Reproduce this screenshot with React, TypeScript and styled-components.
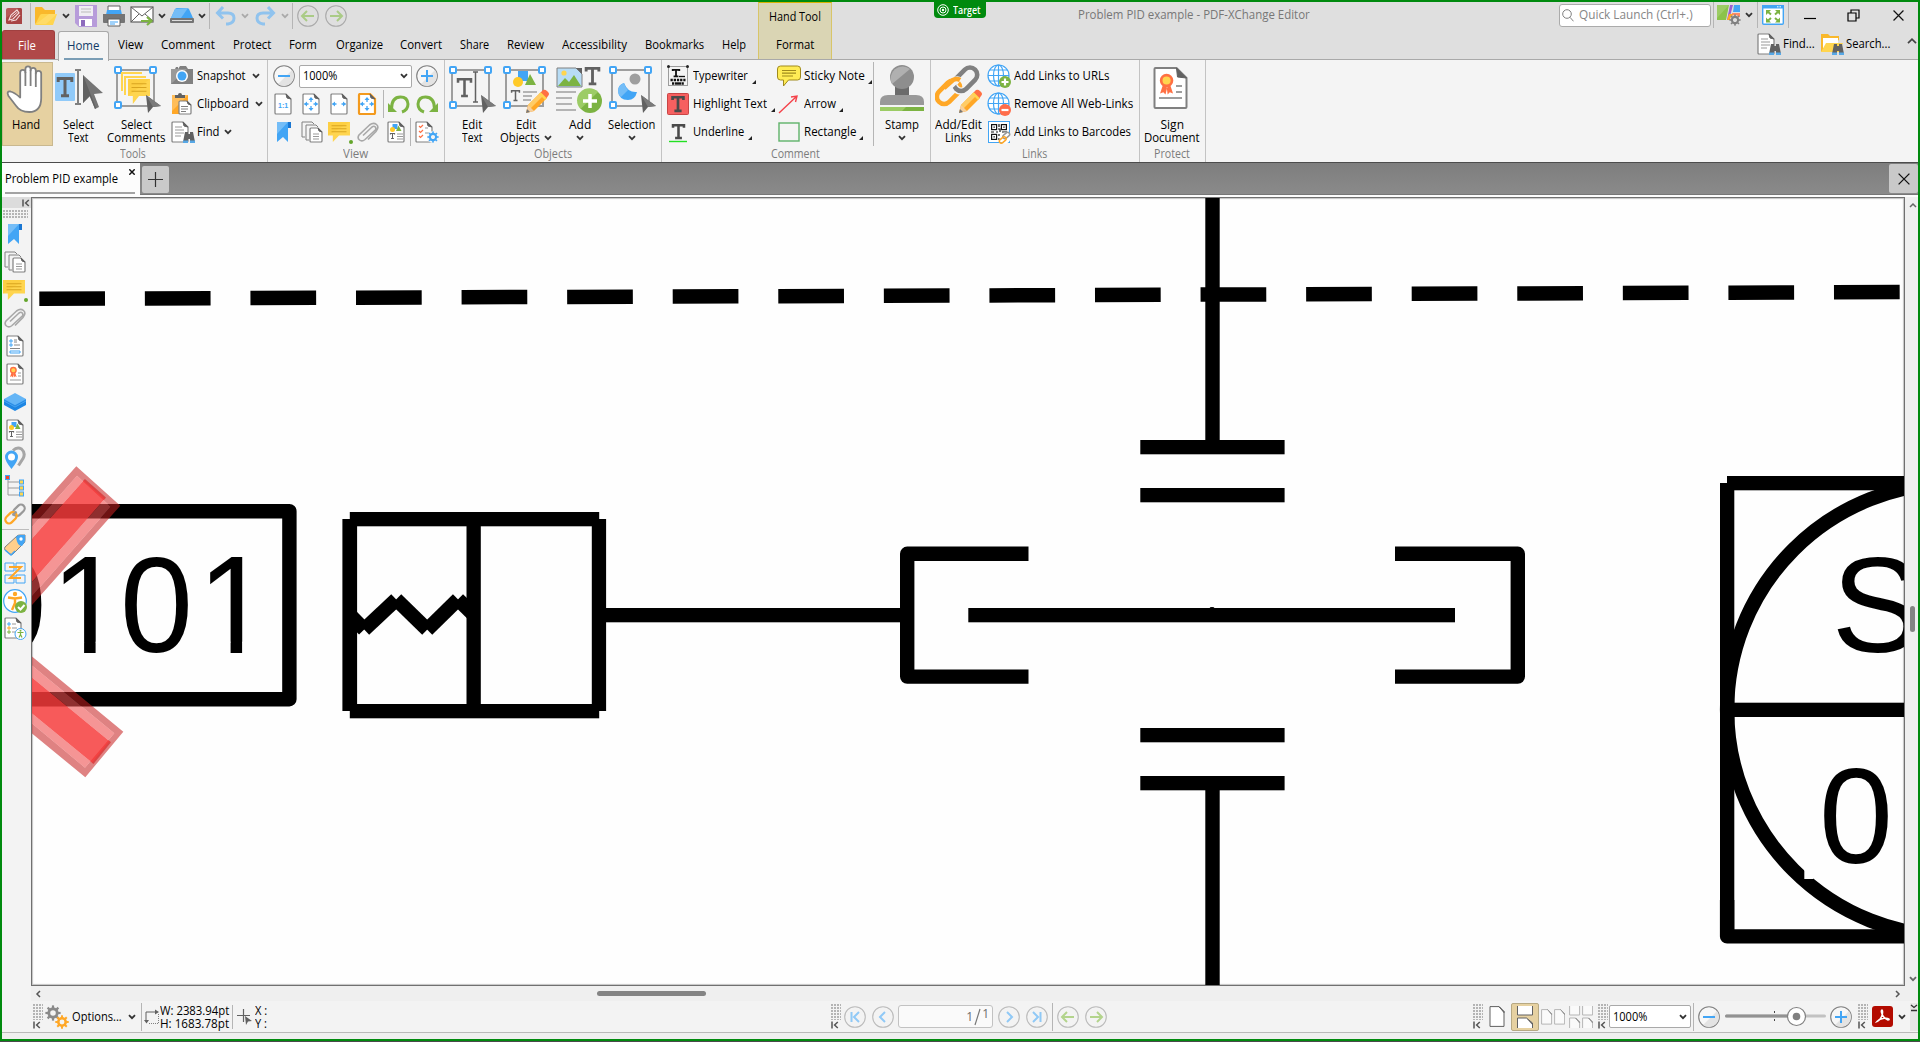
import React, { useLayoutEffect, useRef, useState } from 'react';
import styled, { createGlobalStyle } from 'styled-components';

const GlobalStyle = createGlobalStyle`
  html, body { margin: 0; padding: 0; overflow: hidden; background: #4a4a4a; }
  * { box-sizing: border-box; }
  svg { display: block; flex: none; }
`;

const BLUE = '#42a5f5';
const GRAY = '#808080';
const DARK = '#616161';
const YELLOW = '#ffd54f';
const ORANGE = '#ffa726';
const GREEN = '#7cb342';

/* ---------- text fitted to a fixed run width ---------- */

const FitOuter = styled.span<{ $w: number }>`
  display: inline-block;
  width: ${(p) => p.$w}px;
  white-space: nowrap;
  flex: none;
`;
const FitInner = styled.span`
  display: inline-block;
  transform-origin: 0 50%;
  white-space: nowrap;
`;
function Fit({ w, children }: { w: number; children: React.ReactNode }) {
  const ref = useRef<HTMLSpanElement>(null);
  const [scale, setScale] = useState(1);
  useLayoutEffect(() => {
    if (ref.current && ref.current.offsetWidth) setScale(w / ref.current.offsetWidth);
  }, [w]);
  return (
    <FitOuter $w={w}>
      <FitInner ref={ref} style={{ transform: `scaleX(${scale})` }}>{children}</FitInner>
    </FitOuter>
  );
}

/* ---------- window frame ---------- */

const Window = styled.div`
  width: 1920px;
  height: 1041px;
  border: 2px solid #008a0e;
  background: #f3f3f3;
  display: flex;
  flex-direction: column;
  overflow: hidden;
  color: #000;
  font: 12px/16px "Open Sans", "Noto Sans", sans-serif;
`;
const Header = styled.div`
  position: relative;
  height: 58px;
  background: #dfdfdf;
  border-bottom: 1px solid #a9a9a9;
  display: flex;
`;
const HeaderLeft = styled.div`
  width: 756px;
  display: flex;
  flex-direction: column;
`;
const HeaderRight = styled.div`
  flex: 1;
  display: flex;
  flex-direction: column;
`;
const Bar = styled.div<{ $h: number }>`
  height: ${(p) => p.$h}px;
  display: flex;
  align-items: center;
`;
const Slot = styled.div<{ $w: number; $up?: number }>`
  width: ${(p) => p.$w}px;
  flex: none;
  display: flex;
  align-items: center;
  justify-content: center;
  padding-bottom: ${(p) => p.$up ?? 0}px;
`;
const Sep = styled.div<{ $h: number }>`
  width: 1px;
  height: ${(p) => p.$h}px;
  background: #b5b5b5;
  flex: none;
`;
const Grow = styled.div`
  flex: 1;
`;
const TabItem = styled.div<{ $w: number; $kind?: 'file' | 'home' }>`
  width: ${(p) => p.$w}px;
  height: 29px;
  flex: none;
  display: flex;
  justify-content: center;
  padding-top: 7px;
  padding-right: ${(p) => (p.$kind === 'file' ? 3 : 0)}px;
  color: ${(p) => (p.$kind === 'file' ? '#fff' : p.$kind === 'home' ? '#123a66' : '#000')};
  background: ${(p) => (p.$kind === 'file' ? '#b04848' : p.$kind === 'home' ? '#f4f4f4' : 'transparent')};
  border-radius: ${(p) => (p.$kind ? '3px 3px 0 0' : '0')};
  border: ${(p) => (p.$kind === 'home' ? '1px solid #a9a9a9' : p.$kind === 'file' ? '1px solid #a04040' : 'none')};
  border-bottom: none;
`;
const HomeTab = styled(TabItem)`
  height: 30px;
  margin: 0 0 -2px 3px;
  padding-top: 6px;
  flex-direction: column;
  align-items: center;
  gap: 4px;
  justify-content: flex-start;
`;
const Underline = styled.div`
  width: 39px;
  height: 2px;
  background: #7a9db5;
`;
const ContextTab = styled.div`
  width: 74px;
  height: 57px;
  background: #dad5b4;
  border: 1px solid #d8c568;
  border-top: 1px solid #d9b400;
  border-bottom: none;
  display: flex;
  flex-direction: column;
  align-items: center;
  padding-top: 6px;
  gap: 12px;
`;
const TargetBadge = styled.div`
  position: absolute;
  left: 932px;
  top: -1px;
  width: 52px;
  height: 17px;
  border-radius: 0 0 4px 4px;
  background: #008a0e;
  color: #fff;
  display: flex;
  align-items: center;
  gap: 4px;
  padding-left: 3px;
  font: 600 10px/14px "Open Sans", sans-serif;
`;
const TitleText = styled.div`
  width: 636px;
  padding-left: 246px;
  color: #777;
`;
const SearchBox = styled.div`
  width: 152px;
  height: 23px;
  margin-left: 91px;
  background: #fff;
  border: 1px solid #ababab;
  border-radius: 3px;
  display: flex;
  align-items: center;
  gap: 5px;
  padding-left: 2px;
  color: #868686;
  flex: none;
`;

/* ---------- ribbon ---------- */

const Ribbon = styled.div`
  height: 103px;
  background: #f4f4f4;
  border-bottom: 1px solid #4c4c4c;
  display: flex;
`;
const Group = styled.div<{ $w: number }>`
  width: ${(p) => p.$w}px;
  border-right: 1px solid #c3c3c3;
  display: flex;
  flex-direction: column;
  align-items: stretch;
`;
const GroupBody = styled.div`
  height: 86px;
  padding-top: 2px;
  display: flex;
`;
const GroupLabel = styled.div<{ $pr?: number }>`
  height: 16px;
  padding-right: ${(p) => p.$pr ?? 0}px;
  display: flex;
  justify-content: center;
  color: #7c7c7c;
`;
const BigButton = styled.div<{ $w: number; $on?: boolean }>`
  width: ${(p) => p.$w}px;
  height: 84px;
  flex: none;
  display: flex;
  flex-direction: column;
  align-items: center;
  padding-top: ${(p) => (p.$on ? 2 : 3)}px;
  padding-right: ${(p) => (p.$on ? 3 : 0)}px;
  background: ${(p) => (p.$on ? '#e6d1a1' : 'transparent')};
  border: ${(p) => (p.$on ? '1px solid #c9b88f' : 'none')};
  line-height: 13px;
`;
const Caption = styled.div`
  margin-top: 5px;
  display: flex;
  flex-direction: column;
  align-items: center;
`;
const Line = styled.div`
  height: 13px;
  display: flex;
  align-items: center;
  gap: 4px;
`;
const Column = styled.div<{ $w?: number; $pl?: number }>`
  width: ${(p) => (p.$w ? p.$w + 'px' : 'auto')};
  padding-left: ${(p) => p.$pl ?? 0}px;
  display: flex;
  flex-direction: column;
`;
const Item = styled.div<{ $gap?: number }>`
  height: 28px;
  display: flex;
  align-items: center;
  gap: ${(p) => p.$gap ?? 4}px;
`;
const ItemTail = styled.div<{ $corner?: boolean }>`
  padding-left: ${(p) => (p.$corner ? 0 : 2)}px;
  padding-top: ${(p) => (p.$corner ? 12 : 0)}px;
`;
const Combo = styled.div<{ $w: number; $h?: number }>`
  width: ${(p) => p.$w}px;
  height: ${(p) => p.$h ?? 23}px;
  flex: none;
  background: #fff;
  border: 1px solid #a9a9a9;
  border-radius: 2px;
  display: flex;
  align-items: center;
  justify-content: space-between;
  padding: 0 3px;
`;

/* ---------- document tabs ---------- */

const TabStrip = styled.div`
  height: 32px;
  display: flex;
  background-image: linear-gradient(#7e7e7e, #8a8a8a);
  border-bottom: 1px solid #767676;
`;
const DocTab = styled.div`
  width: 138px;
  height: 32px;
  background: #fcfcfc;
  padding: 8px 5px 0 3px;
  display: flex;
  flex-direction: column;
  gap: 5px;
`;
const DocTabRow = styled.div`
  display: flex;
  justify-content: space-between;
  align-items: flex-start;
  svg { margin-top: -2px; }
`;
const DocTabLine = styled.div`
  height: 2px;
  background: #a3a3a3;
`;
const StripButton = styled.div<{ $w: number; $ml?: number; $h?: number }>`
  width: ${(p) => p.$w}px;
  height: ${(p) => p.$h ?? 27}px;
  margin: ${(p) => (p.$h ? 1 : 3)}px 0 0 ${(p) => p.$ml ?? 0}px;
  background: #c9c9c9;
  border-radius: 2px;
  display: flex;
  align-items: center;
  justify-content: center;
`;
const WhiteRule = styled.div`
  height: 2px;
  background: #fcfcfc;
`;

/* ---------- work area ---------- */

const Work = styled.div`
  flex: none;
  height: 835px;
  display: flex;
`;
const Sidebar = styled.div`
  width: 29px;
  background: #f3f3f3;
  display: flex;
  flex-direction: column;
`;
const SideTop = styled.div`
  width: 29px;
  height: 11px;
  background: #dcdcdc;
  display: flex;
  align-items: center;
  justify-content: flex-end;
  padding-right: 1px;
`;
const Grip = styled.div<{ $w: number; $h: number }>`
  width: ${(p) => p.$w}px;
  height: ${(p) => p.$h}px;
  background-image: radial-gradient(circle at 1px 1px, #b4b4b4 0.8px, transparent 0.9px);
  background-size: 3px 3px;
`;
const SideGrip = styled.div`
  height: 12px;
  padding: 2px 0 0 1px;
`;
const SideSlot = styled.div`
  width: 26px;
  height: 28px;
  display: flex;
  align-items: center;
  justify-content: center;
`;
const SideRule = styled.div`
  width: 27px;
  height: 1px;
  margin: 1px 0;
  background: #bdbdbd;
`;
const Main = styled.div`
  flex: 1;
  display: flex;
  flex-direction: column;
`;
const ViewRow = styled.div`
  height: 789px;
  display: flex;
`;
const Canvas = styled.div`
  width: 1874px;
  height: 789px;
  background: #fefefe;
  border: 1px solid #707070;
  box-shadow: inset 1px 1px 1px #c4c4c4, inset -1px -1px 1px #c4c4c4;
  overflow: hidden;
  svg { margin: -1px; }
`;
const VScroll = styled.div`
  width: 13px;
  background: #efefef;
  display: flex;
  flex-direction: column;
  align-items: center;
  padding: 5px 0 4px 2px;
`;
const VThumb = styled.div`
  width: 5px;
  height: 26px;
  margin-top: 398px;
  border-radius: 3px;
  background: #848484;
`;
const HScroll = styled.div`
  height: 15px;
  background: #efefef;
  display: flex;
  align-items: center;
  padding: 0 17px 0 4px;
`;
const HThumb = styled.div`
  width: 109px;
  height: 5px;
  margin-left: 556px;
  border-radius: 3px;
  background: #848484;
`;
const Status = styled.div`
  height: 31px;
  display: flex;
  align-items: center;
  background: #f3f3f3;
`;
const GripBox = styled.div<{ $ml?: number }>`
  width: 10px;
  height: 26px;
  margin-left: ${(p) => p.$ml ?? 0}px;
  display: flex;
  flex-direction: column;
  gap: 1px;
  flex: none;
`;
const Stack = styled.div<{ $ml?: number }>`
  margin-left: ${(p) => p.$ml ?? 0}px;
  display: flex;
  flex-direction: column;
  line-height: 13px;
  flex: none;
`;
const PageBox = styled.div`
  width: 95px;
  height: 23px;
  border: 1px solid #c2c2c2;
  border-radius: 3px;
  background: #fafafa;
  display: flex;
  align-items: center;
  justify-content: flex-end;
  padding-right: 3px;
  color: #6d6d6d;
  gap: 1px;
`;
const PageTotal = styled.span`
  padding-bottom: 5px;
`;
const Selected = styled.div`
  width: 28px;
  height: 28px;
  border: 1px solid #b7a983;
  border-radius: 2px;
  background: #e6d1a1;
  display: flex;
  align-items: center;
  justify-content: center;
`;
const Gap = styled.div<{ $w: number }>`
  width: ${(p) => p.$w}px;
  flex: none;
`;
const Footer = styled.div`
  flex: 1;
  border-top: 1px solid #b9b9b9;
  background: #efefef;
`;

/* ---------- icons ---------- */

type IP = { w?: number; h?: number; vb?: string; children?: React.ReactNode };
const I = ({ w = 22, h = 22, vb, children }: IP) => (
  <svg width={w} height={h} viewBox={vb ?? `0 0 ${w} ${h}`} fill="none">{children}</svg>
);

const Chev = ({ c = '#333' }: { c?: string }) => (
  <I w={8} h={6}><path d="M1 1.2l3 3 3-3" stroke={c} strokeWidth="1.8" /></I>
);
const Corner = () => <I w={4} h={4}><path d="M4 0v4H0z" fill="#222" /></I>;
const BackTo = () => (
  <I w={8} h={8}><path d="M1 0.5v7M6.8 1L3.6 4l3.2 3" stroke="#555" strokeWidth="1.5" /></I>
);

const PageShape = ({ x = 3, y = 1, w = 16, h = 20, c = GRAY, sw = 1.2, fold = 5 }: { x?: number; y?: number; w?: number; h?: number; c?: string; sw?: number; fold?: number }) => (
  <g>
    <path d={`M${x + 1} ${y}h${w - 1 - fold}l${fold} ${fold}v${h - fold - 1}q0 1 -1 1h${-(w - 2)}q-1 0 -1 -1v${-(h - 2)}q0 -1 1 -1z`} fill="#fff" stroke={c} strokeWidth={sw} />
    <path d={`M${x + w - fold} ${y}l${fold} ${fold}l${-fold + 1} -1z`} fill={DARK} stroke={DARK} strokeWidth={1} />
  </g>
);

const Handles = () => (
  <g>
    <path d="M4 5h37v36H4z" stroke="#9e9e9e" strokeWidth="2" />
    {[[5, 5], [40, 5], [5, 40]].map(([x, y]) => (
      <rect key={`${x}-${y}`} x={x - 3} y={y - 3} width="6" height="6" rx="1" fill="#fff" stroke={BLUE} strokeWidth="2" />
    ))}
  </g>
);
const Cursor = ({ x, y }: { x: number; y: number }) => (
  <g transform={`translate(${x} ${y})`}>
    <path d="M0 0l15 11-8 1-5 6z" fill={DARK} />
    <path d="M0 0l15 11-8 1z" fill="#7a7a7a" />
  </g>
);
const SerifT = ({ x, y, w, h, c = DARK, t = 2.6 }: { x: number; y: number; w: number; h: number; c?: string; t?: number }) => (
  <path
    d={`M${x + t * 0.3} ${y + h * 0.25}V${y + t * 0.35}H${x + w - t * 0.3}V${y + h * 0.25}M${x + w / 2} ${y}V${y + h}M${x + w / 2 - t} ${y + h - t * 0.3}H${x + w / 2 + t}`}
    stroke={c} strokeWidth={t * 0.75}
  />
);
const Pencil = ({ x, y }: { x: number; y: number }) => (
  <g transform={`translate(${x} ${y})`}>
    <path d="M0 24l2-8L14 4l6 6L8 22z" fill={ORANGE} />
    <path d="M2 16L14 4l3 3L4 20z" fill="#ffcc66" />
    <path d="M0 24l2-8 6 6z" fill="#f5cf9f" />
    <path d="M0 24l1-4 3 3z" fill="#777" />
    <path d="M14 4l3-3q2-1 4 1l1 1q2 2 0 4l-2 3z" fill="#ff7043" />
    <path d="M13 5l1.800-1.800 6 6L19 11z" fill={YELLOW} />
  </g>
);

const AppIcon = () => (
  <I w={16} h={16}>
    <rect width="16" height="16" rx="2" fill="#b85858" />
    <path d="M0 10L12 0h2q2 0 2 2v14H2q-2 0-2-2z" fill="#a84545" />
    <path d="M3 12l2-5 6-5 2 3-6 6zM5 13l5-1 4-5" stroke="#f3dcdc" strokeWidth="1.2" />
    <path d="M5.500 9l6-5" stroke="#f3dcdc" />
  </I>
);
const Folder = () => (
  <I w={24} h={20}>
    <path d="M1 18V2q0-1 1-1h6l3 3h10v4" fill="#f9b82b" />
    <path d="M1 19L6 9q.5-1 2-1h15l-4 11z" fill={YELLOW} />
    <path d="M2 18L15 8h8L12 18z" fill="#ffe07a" opacity=".6" />
  </I>
);
const Save = () => (
  <I>
    <path d="M0 0h22v22H4l-4-4V0z" fill="#b79cda" />
    <rect x="4" y="1" width="14" height="10" fill="#f0eef3" />
    <path d="M6 4h10M6 7h10" stroke="#bbb" />
    <rect x="4" y="14" width="13" height="7" fill="#fff" />
    <rect x="6" y="15" width="4" height="6" fill="#8d6bbd" />
  </I>
);
const Print = () => (
  <I>
    <path d="M5 1h12v7H5z" fill="#fff" stroke={DARK} />
    <path d="M4 5h14l1 5H3z" fill={BLUE} />
    <path d="M0 9h22v8q0 1-1 1H1q-1 0-1-1z" fill="#757575" />
    <path d="M5 14h12v7H5z" fill="#fff" stroke={DARK} />
    <path d="M7 17h8M7 19h5" stroke={BLUE} />
  </I>
);
const Mail = () => (
  <I w={24} h={20}>
    <rect x="1" y="1" width="22" height="15" fill="#fff" stroke={DARK} strokeWidth="1.2" />
    <path d="M1 1l11 9L23 1M1 16l8-8M15 8l8 7" stroke={DARK} />
    <path d="M11 15h10M17 11l4.500 4-4.500 4" stroke={GREEN} strokeWidth="2.2" />
  </I>
);
const Scanner = () => (
  <I w={24} h={16}>
    <path d="M5 1q1-1 2-1h10q1 0 2 1l4 9H1z" fill={BLUE} />
    <path d="M5 1L1 10h10L18 0z" fill="#74bdf7" />
    <rect x="0" y="10" width="24" height="5" rx="1" fill="#757575" />
    <path d="M2 12.500h20" stroke="#ddd" />
  </I>
);
const Undo = ({ flip = false }: { flip?: boolean }) => (
  <I w={22} h={20}>
    <g transform={flip ? 'translate(22 0) scale(-1 1)' : undefined}>
      <path d="M8 1L2.500 7 8 12.500M3 7h10q6 0 6 5t-6 6h-2" stroke="#90c3ee" strokeWidth="3" />
    </g>
  </I>
);
const RoundArrow = ({ d, c, ring = '#aaa' }: { d: string; c: string; ring?: string }) => (
  <I>
    <circle cx="11" cy="11" r="10.3" stroke={ring} strokeWidth="1.1" />
    <path d={d} stroke={c} strokeWidth="2" />
  </I>
);
const LEFT = 'M17 11H5.500M10 6l-5 5 5 5';
const RIGHT = 'M5 11h11.500M12 6l5 5-5 5';
const ZoomBtn = ({ plus }: { plus?: boolean }) => (
  <I>
    <circle cx="11" cy="11" r="10.3" fill="#f7f7f7" stroke={GRAY} strokeWidth="1.1" />
    <path d="M19 5A10 10 0 0 1 5 19z" fill="#e3e3e3" />
    <path d={plus ? 'M5 11h12M11 5v12' : 'M5 11h12'} stroke={BLUE} strokeWidth="2" />
  </I>
);

const HandIcon = () => (
  <I w={48} h={48}>
    <path
      d="M18.200 29V7.500a2.600 2.600 0 0 1 5.200 0V4a2.600 2.600 0 0 1 5.200 0v1.500a2.600 2.600 0 0 1 5.200 0V8.500a2.600 2.600 0 0 1 5.400 0V33q0 14-12 14-9 0-13-6L6.500 31q-2.500-5 2-4.500 4 1 9.700 6z"
      fill="#fff" stroke={GRAY} strokeWidth="1.800" strokeLinejoin="round"
    />
    <path d="M23.400 7v14M28.600 5v16M33.800 8v14" stroke={GRAY} strokeWidth="1.800" />
  </I>
);
const SelectTextIcon = () => (
  <I w={48} h={48}>
    <rect x="0" y="8" width="20" height="28" rx="1" fill="#90caf9" />
    <SerifT x={2} y={12} w={16} h={20} t={4} />
    <path d="M20 5h6M20 39h6M23 5v34" stroke={GRAY} strokeWidth="2" />
    <path d="M28 10l20 18-9 1 5 13-4 2-5.500-13L28 38z" fill="#757575" />
    <path d="M28 10v28l7-7 5 13 1-1z" fill={DARK} />
  </I>
);
const CommentShape = ({ x, y, w, h }: { x: number; y: number; w: number; h: number }) => (
  <g>
    <path d={`M${x} ${y}h${w}v${h * 0.68}h${-w * 0.5}l${-w * 0.28} ${h * 0.32}v${-h * 0.32}h${-w * 0.22}z`} fill={YELLOW} />
    <path d={`M${x} ${y + h * 0.68}L${x + w} ${y}h${-w}z`} fill="#f9c62d" opacity=".35" />
    <path d={`M${x + w * 0.16} ${y + h * 0.19}h${w * 0.68}M${x + w * 0.16} ${y + h * 0.34}h${w * 0.68}M${x + w * 0.16} ${y + h * 0.49}h${w * 0.68}`} stroke="#d9a520" strokeWidth="1.1" />
  </g>
);
const SelectCommentsIcon = () => (
  <I w={48} h={48}>
    <Handles />
    <path d="M9 26V8h20" stroke={YELLOW} strokeWidth="2" />
    <path d="M12 30V12h21" stroke={YELLOW} strokeWidth="2" />
    <CommentShape x={15} y={14} w={22} h={25} />
    <Cursor x={33} y={30} />
  </I>
);
const EditTextIcon = () => (
  <I w={48} h={48}>
    <Handles />
    <SerifT x={9} y={13} w={15} h={19} t={3.4} />
    <path d="M25 7h5M25 37h5M27.500 7v30" stroke={DARK} strokeWidth="1.500" />
    <Cursor x={33} y={30} />
  </I>
);
const Shapes = ({ x = 0, y = 0, s = 1 }: { x?: number; y?: number; s?: number }) => (
  <g transform={`translate(${x} ${y}) scale(${s})`}>
    <path d="M5 0h10v10H5z" fill={BLUE} />
    <path d="M12 14L17 3l6 11z" fill={GREEN} />
    <circle cx="5" cy="11" r="5" fill="#ffca28" />
  </g>
);
const EditObjectsIcon = () => (
  <I w={48} h={48}>
    <Handles />
    <Shapes x={11} y={6} />
    <SerifT x={9} y={25} w={9} h={11} t={2} />
    <path d="M21 27h14M21 31h9M21 35h8" stroke="#9e9e9e" strokeWidth="1.600" />
    <Pencil x={24} y={24} />
  </I>
);
const AddIcon = () => (
  <I w={48} h={48}>
    <path d="M1 3h19l6 6v13H1z" fill="#b7dcf5" stroke={GRAY} />
    <path d="M2 21l7-8 4 4 5-7 7 11z" fill={GREEN} />
    <circle cx="8" cy="8" r="2.600" fill={YELLOW} />
    <path d="M20 3l6 6v-6z" fill={DARK} />
    <SerifT x={29} y={2} w={15} h={18} t={3.8} />
    <path d="M0 27h20M0 33h16M0 39h16M0 45h20" stroke="#9e9e9e" strokeWidth="1.500" />
    <circle cx="34" cy="36" r="12" fill={GREEN} />
    <path d="M24.500 44A12 12 0 0 1 42 27z" fill="#9ccc65" />
    <path d="M34 29v14M27 36h14" stroke="#fff" strokeWidth="3.500" />
  </I>
);
const SelectionIcon = () => (
  <I w={48} h={48}>
    <Handles />
    <circle cx="27" cy="14" r="5.500" fill="#9e9e9e" />
    <path d="M16 18q-6 2-6 8 1 9 10 9 7 0 9-8-9 1-13-9z" fill={BLUE} />
    <path d="M16 18q-6 2-6 8 0 4 3 6l7-7q-3-3-4-7z" fill="#74bdf7" />
    <Cursor x={33} y={30} />
  </I>
);
const StampIcon = () => (
  <I w={48} h={48}>
    <path d="M17 20h14v14H17z" fill="#6b6b6b" />
    <circle cx="24" cy="12" r="12" fill="#8e8e8e" />
    <path d="M14 19A12 12 0 0 1 32 4z" fill="#b0b0b0" />
    <path d="M2 40v-3q0-7 8-7h28q8 0 8 7v3z" fill="#999" />
    <path d="M2 42h44v4H2z" fill={GREEN} />
    <path d="M2 42h26l-4 4H2z" fill="#9ccc65" />
  </I>
);
const Chain = ({ size = 22 }: { size?: number }) => (
  <I w={size} h={size} vb="0 0 22 22">
    <rect x="8.500" y="3.500" width="13" height="7.500" rx="3.700" transform="rotate(-45 15 7.250)" stroke="#999" strokeWidth="2.200" />
    <rect x="0.500" y="11" width="13" height="7.500" rx="3.700" transform="rotate(-45 7 14.750)" stroke={ORANGE} strokeWidth="2.200" />
    <path d="M8.500 12.500l4-4" stroke="#999" strokeWidth="2.200" />
  </I>
);
const EditLinksIcon = () => (
  <I w={48} h={48}>
    <rect x="0" y="20" width="27" height="14.500" rx="7.200" transform="rotate(-45 13.500 27.200)" stroke={ORANGE} strokeWidth="4.600" />
    <rect x="17" y="7" width="27" height="14.500" rx="7.200" transform="rotate(-45 30.500 14.200)" stroke="#f4f4f4" strokeWidth="7.500" />
    <rect x="17" y="7" width="27" height="14.500" rx="7.200" transform="rotate(-45 30.500 14.200)" stroke={GRAY} strokeWidth="4.600" />
    <path d="M11 24l8-7.500q3-2.500 6-.5" stroke="#f4f4f4" strokeWidth="7.500" />
    <path d="M9 23l9-8q4-2 7 0" stroke={ORANGE} strokeWidth="4.600" />
    <path d="M24 46l3-8 17-15" stroke="#f4f4f4" strokeWidth="3" />
    <Pencil x={24} y={24} />
  </I>
);
const Rosette = ({ x = 0, y = 0, s = 1 }: { x?: number; y?: number; s?: number }) => (
  <g transform={`translate(${x} ${y}) scale(${s})`}>
    <path d="M4 9l-3 9 3-1 2 2 2-8zM10 9l3 9-3-1-2 2-1-8z" fill="#ff7043" />
    <circle cx="7" cy="6" r="5" fill={YELLOW} stroke="#ff7043" strokeWidth="2.500" />
  </g>
);
const SignIcon = () => (
  <I w={48} h={48}>
    <PageShape x={6.500} y={3} w={32} h={40} c={GRAY} sw={2} fold={10} />
    <Rosette x={11} y={9} s={1.08} />
    <path d="M28 21h6M28 27h6M11 33h23" stroke="#9e9e9e" strokeWidth="2" />
  </I>
);

const Camera = () => (
  <I>
    <path d="M0 4h4l1-2h2v2l2-3h6l2 3h5v15H0z" fill={GRAY} />
    <path d="M0 19L16 4H0z" fill="#9a9a9a" />
    <circle cx="11" cy="11" r="6" fill="#fff" />
    <circle cx="11" cy="11" r="4.500" fill={BLUE} />
  </I>
);
const Clipboard = () => (
  <I>
    <path d="M1 2h16v19H1z" fill={ORANGE} />
    <path d="M1 2h16L1 18z" fill="#ffbd58" />
    <path d="M4 5V2h3q0-2 2-2t2 2h3v3z" fill={DARK} />
    <PageShape x={8} y={8} w={12} h={13} fold={4} />
    <path d="M10 13.500h7M10 16h7M10 18.500h5" stroke={GRAY} />
  </I>
);
const Binoc = ({ x, y }: { x: number; y: number }) => (
  <g transform={`translate(${x} ${y})`}>
    <path d="M2 0h3v2h2V0h3l2 10H7V7H5v3H0z" fill={DARK} />
    <path d="M0 8.500h5V11H0zM7 8.500h5V11H7z" fill="#57a8e6" />
  </g>
);
const FindIcon = () => (
  <I w={24} h={22}>
    <PageShape x={1} y={1} w={16} h={20} />
    <path d="M4 6h7M4 9h9M4 12h9M4 15h6" stroke="#999" />
    <Binoc x={12} y={11} />
  </I>
);
const SearchFolder = () => (
  <I w={24} h={22}>
    <path d="M1 19V1h7l2 2h9v4" fill="#f9b82b" />
    <path d="M3 5h15v10H3z" fill="#fff" />
    <path d="M1 19l5-9h17l-4 9z" fill={YELLOW} />
    <Binoc x={12} y={11} />
  </I>
);
const BlueText = styled.text`
  font: 700 7px "Liberation Sans", sans-serif;
  fill: ${BLUE};
`;
const Page11 = () => (
  <I><PageShape /><BlueText x="6" y="14.500">1:1</BlueText></I>
);
const PageArrows = ({ orange, wide }: { orange?: boolean; wide?: boolean }) => (
  <I>
    <PageShape c={orange ? '#f39a1e' : GRAY} sw={orange ? 2.2 : 1.2} />
    <path d="M4.500 11h4M13.500 11h4" stroke={BLUE} strokeWidth="1.300" />
    <path d="M7 8.500L4 11l3 2.500zM15 8.500l3 2.500-3 2.500z" fill={BLUE} />
    {!wide && (
      <>
        <path d="M11 5v4M11 13v4" stroke={BLUE} strokeWidth="1.300" />
        <path d="M8.500 7L11 4l2.500 3zM8.500 15l2.500 3 2.500-3z" fill={BLUE} />
      </>
    )}
  </I>
);
const Rotate = ({ flip }: { flip?: boolean }) => (
  <I>
    <g transform={flip ? 'translate(22 0) scale(-1 1)' : undefined}>
      <path d="M3.500 16q0-12 9-12 7 0 7.500 7 0 6-6 8" stroke={GREEN} strokeWidth="3" />
      <path d="M0 10v9h9z" fill={GREEN} />
    </g>
  </I>
);
const Bookmark = () => (
  <I>
    <path d="M4 1h14v6h-3v14l-5-5-6 5z" fill={BLUE} />
    <path d="M4 1h11L4 13z" fill="#74bdf7" />
    <path d="M15 1h3v6h-3z" fill="#1976d2" />
  </I>
);
const Pages = () => (
  <I w={24} h={22}>
    <path d="M2 16V1h10l2 2M2 16h3M6 19V4h10l2 2M6 19h3" stroke={GRAY} />
    <PageShape x={10} y={7} w={12} h={14} fold={4} />
    <path d="M13 13h6M13 15.500h6M13 18h6" stroke="#999" />
  </I>
);
const Comment = () => (
  <I w={26} h={24}>
    <CommentShape x={1} y={2} w={22} h={20} />
    <circle cx="24" cy="22" r="2" fill="#63a52a" />
  </I>
);
const Clip = () => (
  <I w={24} h={22}>
    <path
      d="M7 14L16 5.500q2-1.500 3.300 0t-.3 3.300L9 18q-3 2.500-5.500.5t-.5-5L13.500 3.500q4-3 7-.5t-.5 7L12 18"
      stroke="#a8a8a8" strokeWidth="1.600" transform="translate(0 .5)"
    />
  </I>
);
const ContentPage = () => (
  <I>
    <PageShape />
    <Shapes x={5} y={3} s={0.5} />
    <SerifT x={5} y={12} w={5} h={6} t={1.4} />
    <path d="M12 13h6M12 15.500h6M12 18h6" stroke="#999" />
  </I>
);
const Gear = ({ x, y, r, c }: { x: number; y: number; r: number; c: string }) => (
  <g transform={`translate(${x} ${y})`}>
    <circle r={r * 0.62} stroke={c} strokeWidth={r * 0.42} />
    {[0, 45, 90, 135, 180, 225, 270, 315].map((a) => (
      <rect key={a} x={-r * 0.16} y={-r * 1.12} width={r * 0.32} height={r * 0.42} fill={c} transform={`rotate(${a})`} />
    ))}
  </g>
);
const ListGear = () => (
  <I w={24} h={22}>
    <PageShape x={1} />
    <path d="M4 5l1.500 1.500L8 4M4 10l1.500 1.500L8 9M4 15l1.500 1.500L8 14" stroke="#ff7043" strokeWidth="1.200" />
    <path d="M10 7h3M10 12h4" stroke="#999" />
    <circle cx="18" cy="16" r="6" fill="#f4f4f4" />
    <Gear x={18} y={16} r={5} c={BLUE} />
  </I>
);
const Typewriter = () => (
  <I>
    <rect x="1.500" y="1.500" width="19" height="19" stroke="#444" strokeDasharray="1 1" />
    <circle cx="1.500" cy="1.500" r="1.500" fill="#222" /><circle cx="20.500" cy="1.500" r="1.500" fill="#222" />
    <SerifT x={5} y={4} w={8} h={8} t={2.4} c="#111" />
    <path d="M12 11.500h6" stroke="#111" strokeWidth="1.300" />
    <path d="M3.500 15h15M5 18.500h2.500M14.500 18.500H17" stroke="#111" strokeWidth="2.400" strokeDasharray="2.300 .9" />
    <path d="M8 18.500h6" stroke="#111" strokeWidth="2.400" />
  </I>
);
const HighlightIcon = () => (
  <I>
    <rect x=".5" y=".5" width="21" height="21" rx="1" fill="#f66060" stroke="#c94545" />
    <SerifT x={4.500} y={3} w={13} h={16} t={3.6} c="#4a4a4a" />
  </I>
);
const UnderlineIcon = () => (
  <I>
    <SerifT x={5} y={3} w={13} h={15} t={3.4} c="#4a4a4a" />
    <path d="M2 20.500h18" stroke="#22e022" strokeWidth="1.400" />
  </I>
);
const StickyIcon = () => (
  <I w={24} h={22}>
    <path d="M3.500 1h17q3 0 3 3v8q0 3-3 3h-9l-5 6v-6h-3q-3 0-3-3V4q0-3 3-3z" fill="#ffec55" stroke="#a08a1c" />
    <path d="M5 5.500h14M5 8.200h14M5 11h11" stroke="#a08a1c" strokeWidth="1.200" />
  </I>
);
const ArrowIcon = () => (
  <I w={24} h={22}><path d="M2 20L20 3M14 4l6-1-1.500 6" stroke="#f4424a" strokeWidth="1.400" /></I>
);
const RectIcon = () => (
  <I w={24} h={22}><rect x="2" y="2" width="20" height="18" stroke="#5fb36a" strokeWidth="1.400" /></I>
);
const Globe = ({ minus }: { minus?: boolean }) => (
  <I w={24} h={24}>
    <g stroke={BLUE} strokeWidth="1.200">
      <circle cx="11.500" cy="11.500" r="10.500" fill="#fff" />
      <ellipse cx="11.500" cy="11.500" rx="5" ry="10.500" />
      <path d="M11.500 1v21M1 11.500h21M3 6h17M3 17h17" />
    </g>
    <circle cx="18" cy="18" r="6" fill={minus ? '#ff6d4a' : GREEN} />
    <path d={minus ? 'M14.500 18h7' : 'M14.500 18h7M18 14.500v7'} stroke="#fff" strokeWidth="2.200" />
  </I>
);
const Barcode = () => (
  <I w={24} h={24}>
    <rect x="1.500" y="1.500" width="21" height="21" fill="#fff" stroke={BLUE} />
    <g stroke="#111" strokeWidth="1.200">
      <rect x="4.600" y="4.600" width="5" height="5" /><rect x="14.400" y="4.600" width="5" height="5" /><rect x="4.600" y="14.400" width="5" height="5" />
      <path d="M12 4v3M11 9h2v3M4 12h3M9 12h2M15 12h5M12 14v2M12 18v2" />
    </g>
    <path d="M6.500 6.500h1.300v1.300H6.500zM16.300 6.500h1.300v1.300h-1.300zM6.500 16.300h1.300v1.300H6.500z" fill="#111" />
    <circle cx="18" cy="18" r="5.500" fill="#fff" />
    <g strokeWidth="1.500">
      <rect x="15.500" y="13.500" width="7.500" height="4" rx="2" transform="rotate(-40 19.250 15.500)" stroke="#999" />
      <rect x="12" y="18" width="7.500" height="4" rx="2" transform="rotate(-40 15.750 20)" stroke={ORANGE} />
    </g>
  </I>
);
const TargetIcon = () => (
  <I w={12} h={12}>
    <circle cx="6" cy="6" r="5.300" stroke="#fff" /><circle cx="6" cy="6" r="3" stroke="#fff" /><circle cx="6" cy="6" r="1.200" fill="#fff" />
  </I>
);
const Lens = () => (
  <I w={12} h={13}><circle cx="5" cy="5" r="4.300" stroke={GRAY} /><path d="M8 8.300l3.500 4" stroke={GRAY} /></I>
);
const UiOptions = () => (
  <I w={24} h={22}>
    <path d="M0 1h12l-3 15H0z" fill="#8bc34a" /><path d="M0 1h12L0 14z" fill="#9ccc65" />
    <path d="M13 1h3l-4 15h-2z" fill="#9c5fd0" />
    <path d="M17 1h6v7h-7z" fill={BLUE} /><path d="M15 9h8v4h-8z" fill="#ff8a65" /><path d="M12 10l4 0-3 6h-3z" fill={ORANGE} />
    <circle cx="18" cy="16" r="5" fill="#dfdfdf" />
    <Gear x={18} y={16} r={5} c={GRAY} />
  </I>
);
const FullScreen = () => (
  <I w={22} h={20}>
    <rect x=".7" y=".7" width="20.600" height="18.600" rx="1" fill="#fff" stroke={BLUE} strokeWidth="1.400" />
    <path d="M0 0h22v3.500H0z" fill={BLUE} />
    <path d="M15 1.800h1.500M17.500 1.800H19" stroke="#fff" />
    <path d="M4 5h5l-5 5zM18 5h-5l5 5zM4 17.500h5l-5-5zM18 17.500h-5l5-5z" fill={GREEN} />
    <path d="M5 6l4 3.500M17 6l-4 3.500M5 16.500L9 13M17 16.500L13 13" stroke={GREEN} strokeWidth="2" />
  </I>
);
const Minimize = () => <I w={12} h={12}><path d="M0 9.500h12" stroke="#000" strokeWidth="1.200" /></I>;
const Restore = () => (
  <I w={13} h={13}><path d="M1 4h8v8H1zM4 4V1h8v8H9" stroke="#000" strokeWidth="1.200" /></I>
);
const Cross = ({ s = 11, t = 1.1 }: { s?: number; t?: number }) => (
  <I w={s} h={s} vb="0 0 10 10"><path d="M.5.5l9 9M9.500.5l-9 9" stroke="#111" strokeWidth={t} /></I>
);

/* sidebar */
const FormPage = () => (
  <I>
    <PageShape />
    <path d="M6 5h2v2H6zM6 9h2v2H6zM6 16h10v2H6z" stroke={BLUE} />
    <path d="M10 5h3M10 7h3M10 10h6M6 13.500h10" stroke="#888" />
  </I>
);
const SigPage = () => (
  <I>
    <PageShape />
    <Rosette x={5.500} y={4} s={0.55} />
    <path d="M14 10h3M14 13h3M6 17h11" stroke="#999" />
  </I>
);
const Layers = () => (
  <I w={22} h={20}>
    <path d="M0 13l11 6 11-6v-3H0z" fill="#1e88e5" /><path d="M0 10l11 6 11-6V7H0z" fill={BLUE} /><path d="M0 7l11-6 11 6-11 6z" fill="#64b5f6" />
    <path d="M0 10l11 6 11-6M0 8l11 6 11-6" stroke="#1976d2" strokeWidth=".6" />
  </I>
);
const Pins = () => (
  <I w={22} h={24}>
    <path d="M9 4.500q4-4 8.500-1.500 4.500 4 1.500 9.500l-4.500 7" stroke="#a5a5a5" strokeWidth="3" />
    <path d="M7.500 23q-6.500-8-6.500-12a6.500 6.500 0 0 1 13 0q0 4-6.500 12z" fill={BLUE} />
    <circle cx="7.500" cy="11" r="3.500" fill="#fff" />
  </I>
);
const Tree = () => (
  <I w={22} h={22}>
    <path d="M4 4v16h12M4 7h12M4 13h12" stroke="#999" />
    <rect x="1.500" y=".5" width="4" height="4" fill="#f4442e" stroke={BLUE} />
    {[5, 11, 17].map((y) => <rect key={y} x="15.500" y={y} width="4" height="4" fill={YELLOW} stroke={BLUE} />)}
  </I>
);
const Tag = () => (
  <I w={22} h={22}>
    <path d="M1 13L13 2q1-1 3-1h5v5q0 2-1 3L9 20q-1 1-3 0l-5-4q-1-1 0-3z" fill="#ffcf8b" stroke={GRAY} />
    <path d="M12 3q1-2 4-2h5v5q0 2-1 3l-2 3q-5 0-6-9z" fill={BLUE} />
    <circle cx="17" cy="5" r="1.700" fill="#fff" />
    <path d="M1 16l6 5 4-4" stroke={BLUE} strokeWidth="1.500" />
  </I>
);
const Reorder = () => (
  <I w={22} h={22}>
    <path d="M1 1h9v8H1zM12 1h9v8h-9zM1 13h9v8H1zM12 13h9v8h-9z" stroke={BLUE} />
    <path d="M5 5h12L6 16h11" stroke={ORANGE} strokeWidth="2" />
  </I>
);
const AccessOk = () => (
  <I w={25} h={24}>
    <circle cx="12" cy="12" r="11.300" fill="#fff" stroke={BLUE} strokeWidth="1.200" />
    <circle cx="12" cy="5" r="2.200" fill={ORANGE} />
    <path d="M5 8.500l7 1 7-1M12 9v6M12 14l-3 7M12 14l2 5" stroke={ORANGE} strokeWidth="2.400" />
    <circle cx="18" cy="18" r="6" fill={GREEN} />
    <path d="M15 18l2.500 2.500L21.500 16" stroke="#fff" strokeWidth="2" />
  </I>
);
const AccessPage = () => (
  <I w={24} h={24}>
    <PageShape x={2} y={1} w={16} h={20} />
    <path d="M5 6h2v2H5z" stroke={BLUE} /><path d="M5 10h2v2H5z" stroke={ORANGE} /><path d="M5 14h2v2H5z" stroke={GREEN} />
    <path d="M9 7h4M9 11h5M9 15h3" stroke="#999" />
    <circle cx="17.500" cy="17" r="5.500" fill="#fff" stroke={BLUE} />
    <path d="M14.500 15.500h6M17.500 15v3M17.500 17.500l-1.500 3M17.500 17.500l1.500 3" stroke={GREEN} strokeWidth="1.200" />
    <circle cx="17.500" cy="13.700" r="1" fill={GREEN} />
  </I>
);

/* status bar */
const Gears = () => (
  <I w={24} h={24}><Gear x={8} y={8} r={6.800} c="#8a8a8a" /><Gear x={17} y={17} r={6} c={ORANGE} /></I>
);
const SizeIcon = () => (
  <I w={16} h={16}>
    <path d="M2 12V3h10" stroke={DARK} /><path d="M0 11h5l-2.500 3.500zM11 .5v5L15 3z" fill={DARK} />
    <path d="M5 14.500h9.500V5" stroke={GRAY} strokeDasharray="1 1" />
  </I>
);
const CrossIcon = () => (
  <I w={16} h={16}><path d="M6.500 0v13M0 6.500h13" stroke={DARK} strokeWidth="1.200" /><path d="M8 7l7 5-4 .5L9 16z" fill={DARK} /></I>
);
const OnePage = () => (
  <I w={16} h={21}>
    <path d="M1 .6h9l5 5v14.800H1z" fill="#fff" stroke={DARK} /><path d="M10 .6l5 5v1z" fill={DARK} stroke={DARK} />
  </I>
);
const Continuous = () => (
  <I w={18} h={22}>
    <path d="M1.500 0v9h15V0M1.500 22V12h9l6 5v5" fill="#fff" stroke={DARK} /><path d="M10 12l6.500 5v2z" fill={DARK} />
  </I>
);
const TwoPages = () => (
  <I w={24} h={16}>
    {[0, 13].map((x) => (
      <g key={x}><path d={`M${x + .6} .6h6l4 4v10.500h-10z`} stroke="#b5b5b5" fill="#fafafa" /><path d={`M${x + 6.600} .6l4 4v1z`} fill="#999" stroke="#999" /></g>
    ))}
  </I>
);
const FourPages = () => (
  <I w={24} h={22}>
    {[0, 13].map((x) => (
      <g key={x}><path d={`M${x + .6} 0v9h10V0M${x + .6} 22V12h6l4 4v6`} stroke="#b5b5b5" fill="#fafafa" /><path d={`M${x + 6.600} 12l4 4v1z`} fill="#999" stroke="#999" /></g>
    ))}
  </I>
);
const Slider = () => (
  <I w={101} h={22}>
    <path d="M1.500 10h98" stroke="#c2c2c2" strokeWidth="3" strokeLinecap="round" />
    <path d="M1.500 10h70" stroke="#929292" strokeWidth="3" strokeLinecap="round" />
    <path d="M49.500 5v2M49.500 13v2" stroke="#444" />
    <circle cx="71.500" cy="10.500" r="9" fill="#fff" stroke={GRAY} strokeWidth="1.200" /><circle cx="71.500" cy="10.500" r="3.800" fill={GRAY} />
  </I>
);
const Acrobat = () => (
  <I w={21} h={21}>
    <rect width="21" height="21" rx="3" fill="#b30b00" />
    <path d="M5 15.500q4-1.500 5.500-8 .5-3-.5-3.500-1.500.5 0 4 1.500 4 6 6 1.500 0 1-1-2-1.500-6-.5-4 .5-6 3z" stroke="#fff" strokeWidth="1.400" />
  </I>
);

/* ---------- drawing ---------- */

const Numerals = styled.text<{ $size: number }>`
  font-family: "Liberation Sans", sans-serif;
  font-size: ${(p) => p.$size}px;
  fill: #000;
`;

const bars: [number, number, number, number][] = [
  [1205.3, 197, 1219.7, 447], [1205.3, 780, 1219.7, 986],
  [1140.3, 440, 1284.6, 454.3], [1140.3, 488, 1284.6, 502.3],
  [1140.3, 728, 1284.6, 742.3], [1140.3, 776, 1284.6, 790.3],
  [968.3, 608, 1455, 622.3], [604, 608, 907, 622.3],
  [342.4, 519, 357.1, 711], [349.8, 512, 599.2, 526.3],
  [349.8, 704, 599.2, 718.3], [466.5, 520, 480.8, 711], [591.8, 519, 606.1, 711],
  [1720, 483, 1734.3, 937], [1727, 476, 1910, 490.3], [1722, 702.7, 1910, 717],
];
const zig = [[349, 614], [364.2, 629.6], [396.2, 599.4], [427.2, 629.6], [458, 599.4], [474, 615]];

/* A numeral one drawn without its foot: only the stem shows below the foot line. */
const One = ({ x, id }: { x: number; id: string }) => (
  <g>
    <clipPath id={id}>
      <rect x={x} y="540" width="80" height="101.800" />
      <rect x={x + 33.2} y="640" width="11.500" height="20" />
    </clipPath>
    <g clipPath={`url(#${id})`}>
      <Numerals $size={138.5} x={x} y="652.600" textLength="73.200" lengthAdjust="spacingAndGlyphs">1</Numerals>
    </g>
  </g>
);

const Drawing = () => (
  <svg width="1874" height="789" viewBox="31 197 1874 789" fill="none">
    {bars.map(([x1, y1, x2, y2]) => (
      <rect key={`${x1}-${y1}`} x={x1} y={y1} width={x2 - x1} height={y2 - y1} fill="#000" />
    ))}
    <path d="M39.300 298.800L1900 292.100" stroke="#000" strokeWidth="14.500" strokeDasharray="65.700 39.870" />
    <g stroke="#000" strokeWidth="14.400" strokeLinejoin="round">
      <path d="M20 511.200H289.400V699.200H20" />
      <path d="M1028.500 553.800H907.200V676.600H1028.500" />
      <path d="M1395 553.800H1517.800V676.600H1395" />
      <path d="M1727.100 900V936.400H1910" />
      <circle cx="1953.700" cy="709.800" r="226.600" />
      {zig.slice(1).map(([x, y], i) => <path key={x} d={`M${zig[i][0]} ${zig[i][1]}L${x} ${y}`} />)}
    </g>
    <path d="M1804.300 868V879H1813.500L1812 872z" fill="#fefefe" />
    <ellipse cx="1212" cy="608.300" rx="2.500" ry="1.300" fill="#000" />
    <Numerals $size={136} x="-26.500" y="652" textLength="73" lengthAdjust="spacingAndGlyphs">0</Numerals>
    <One x={50.9} id="one-a" />
    <Numerals $size={136} x="120" y="652" textLength="73" lengthAdjust="spacingAndGlyphs">0</Numerals>
    <One x={197.4} id="one-b" />
    <Numerals $size={136} x="1831.500" y="652.300">S</Numerals>
    <Numerals $size={136} x="1819" y="863" textLength="74" lengthAdjust="spacingAndGlyphs">0</Numerals>
    <g fillRule="evenodd">
      <path d="M76.300 466.300L120.300 505.700 20 618.400V529.300zM77 475.700L110.700 506.700 20 610V540.300z" fill="rgba(198,32,32,.56)" />
      <path d="M77 475.700L110.700 506.700 20 610V540.300zM84.300 479.700L105.300 498.300 20 595.800V552z" fill="rgba(238,78,78,.6)" />
      <path d="M84.300 479.700L105.300 498.300 20 595.800V552z" fill="rgba(245,58,58,.84)" />
      <path d="M84.300 479.700L105.300 498.300" stroke="#dc4444" strokeWidth="2" />
      <path d="M20 646.600L123.300 731.700 85.300 777.300 20 723.600zM20 655.600L114.300 733.300 85 767.700 20 713.600z" fill="rgba(198,32,32,.56)" />
      <path d="M20 655.600L114.300 733.300 85 767.700 20 713.600zM20 667.600L110.200 741.700 92.700 763.300 20 703.600z" fill="rgba(238,78,78,.6)" />
      <path d="M20 667.600L110.200 741.700 92.700 763.300 20 703.600z" fill="rgba(245,58,58,.84)" />
      <path d="M110.200 741.700L92.700 763.300" stroke="#dc4444" strokeWidth="2" />
    </g>
  </svg>
);

/* ---------- composed parts ---------- */

type Word = [string, number];
function Big({ w, icon, lines, on, chev }: { w: number; icon: React.ReactNode; lines: Word[]; on?: boolean; chev?: 'below' | 'inline' }) {
  return (
    <BigButton $w={w} $on={on}>
      {icon}
      <Caption>
        {lines.map(([t, tw], i) => (
          <Line key={t}>
            <Fit w={tw}>{t}</Fit>
            {chev === 'inline' && i === lines.length - 1 && <Chev />}
          </Line>
        ))}
        {chev === 'below' && <Line><Chev /></Line>}
      </Caption>
    </BigButton>
  );
}
function Small({ icon, text, w, tail, gap }: { icon: React.ReactNode; text: string; w: number; tail?: 'chev' | 'corner'; gap?: number }) {
  return (
    <Item $gap={gap}>
      {icon}
      <Fit w={w}>{text}</Fit>
      {tail && <ItemTail $corner={tail === 'corner'}>{tail === 'chev' ? <Chev /> : <Corner />}</ItemTail>}
    </Item>
  );
}
const StatusGrip = ({ ml }: { ml?: number }) => (
  <GripBox $ml={ml}><Grip $w={10} $h={16} /><BackTo /></GripBox>
);

const tabs: [string, number, number][] = [
  ['View', 43, 25], ['Comment', 72, 53.5], ['Protect', 56, 38], ['Form', 46, 27.5], ['Organize', 66, 47],
  ['Convert', 57, 42], ['Share', 50, 29], ['Review', 52, 37], ['Accessibility', 86, 65], ['Bookmarks', 74, 59], ['Help', 46, 24],
];
const side = [Bookmark, Pages, Comment, Clip, FormPage, SigPage, Layers, ContentPage, Pins, Tree, Chain];
const sideLower = [Tag, Reorder, AccessOk, AccessPage];

export default function App() {
  return (
    <>
      <GlobalStyle />
      <Window>
        <Header>
          <HeaderLeft>
            <Bar $h={28}>
              <Slot $w={24}><AppIcon /></Slot>
              <Slot $w={8}><Sep $h={26} /></Slot>
              <Slot $w={24}><Folder /></Slot>
              <Slot $w={16}><Chev /></Slot>
              <Slot $w={24}><Save /></Slot>
              <Slot $w={32}><Print /></Slot>
              <Slot $w={24}><Mail /></Slot>
              <Slot $w={16}><Chev /></Slot>
              <Slot $w={24}><Scanner /></Slot>
              <Slot $w={15}><Chev /></Slot>
              <Sep $h={26} />
              <Slot $w={31}><Undo /></Slot>
              <Slot $w={8}><Chev c="#aaa" /></Slot>
              <Slot $w={32}><Undo flip /></Slot>
              <Slot $w={8}><Chev c="#aaa" /></Slot>
              <Gap $w={3} /><Sep $h={26} /><Gap $w={4} />
              <Slot $w={22}><RoundArrow d={LEFT} c="#aacb86" /></Slot>
              <Gap $w={6} />
              <Slot $w={22}><RoundArrow d={RIGHT} c="#aacb86" /></Slot>
            </Bar>
            <Bar $h={29}>
              <TabItem $w={53} $kind="file"><Fit w={18}>File</Fit></TabItem>
              <HomeTab $w={51} $kind="home"><Fit w={32.5}>Home</Fit><Underline /></HomeTab>
              {tabs.map(([t, w, tw]) => (
                <TabItem key={t} $w={w}><Fit w={tw}>{t}</Fit></TabItem>
              ))}
            </Bar>
          </HeaderLeft>
          <ContextTab>
            <Fit w={51.5}>Hand Tool</Fit>
            <Fit w={38}>Format</Fit>
          </ContextTab>
          <HeaderRight>
            <Bar $h={26}>
              <TitleText><Fit w={232}>Problem PID example - PDF-XChange Editor</Fit></TitleText>
              <SearchBox><Lens /><Fit w={114}>Quick Launch (Ctrl+.)</Fit></SearchBox>
              <Gap $w={2} /><Sep $h={26} /><Gap $w={3} />
              <UiOptions />
              <Slot $w={16}><Chev /></Slot>
              <Sep $h={26} />
              <Slot $w={30}><FullScreen /></Slot>
              <Sep $h={26} />
              <Gap $w={15} /><Minimize />
              <Gap $w={31} /><Restore />
              <Gap $w={33} /><Cross />
            </Bar>
            <Bar $h={32}>
              <Grow />
              <FindIcon /><Gap $w={2} /><Fit w={31.5}>Find...</Fit>
              <Gap $w={6} /><SearchFolder /><Gap $w={2} /><Fit w={44}>Search...</Fit>
              <Gap $w={17} />
              <Slot $w={10} $up={6}><I w={10} h={6}><path d="M1 5.200l4-4 4 4" stroke="#444" strokeWidth="1.700" /></I></Slot>
              <Gap $w={1} />
            </Bar>
          </HeaderRight>
          <TargetBadge><TargetIcon /><Fit w={27.5}>Target</Fit></TargetBadge>
        </Header>

        <Ribbon>
          <Group $w={266}>
            <GroupBody>
              <Big w={51} on icon={<HandIcon />} lines={[['Hand', 28]]} />
              <Big w={51} icon={<SelectTextIcon />} lines={[['Select', 31], ['Text', 20.5]]} />
              <Big w={65} icon={<SelectCommentsIcon />} lines={[['Select', 31], ['Comments', 58.5]]} />
              <Column $pl={2}>
                <Small icon={<Camera />} text="Snapshot" w={49} tail="chev" />
                <Small icon={<Clipboard />} text="Clipboard" w={51.5} tail="chev" />
                <Small gap={2} icon={<FindIcon />} text="Find" w={22.5} tail="chev" />
              </Column>
            </GroupBody>
            <GroupLabel $pr={4}><Fit w={26}>Tools</Fit></GroupLabel>
          </Group>

          <Group $w={177}>
            <GroupBody>
              <Column>
                <Item $gap={0}>
                  <Gap $w={5} /><ZoomBtn /><Gap $w={4} />
                  <Combo $w={113}><Fit w={34}>1000%</Fit><Chev /></Combo>
                  <Gap $w={4} /><ZoomBtn plus />
                </Item>
                <Item $gap={0}>
                  <Gap $w={1} />
                  <Slot $w={28}><Page11 /></Slot>
                  <Slot $w={28}><PageArrows /></Slot>
                  <Slot $w={28}><PageArrows wide /></Slot>
                  <Slot $w={28}><PageArrows orange /></Slot>
                  <Slot $w={4}><Sep $h={28} /></Slot>
                  <Slot $w={27}><Rotate /></Slot>
                  <Slot $w={29}><Rotate flip /></Slot>
                </Item>
                <Item $gap={0}>
                  <Gap $w={2} />
                  <Slot $w={28}><Bookmark /></Slot>
                  <Slot $w={28}><Pages /></Slot>
                  <Slot $w={28}><Comment /></Slot>
                  <Slot $w={28}><Clip /></Slot>
                  <Slot $w={28}><ContentPage /></Slot>
                  <Sep $h={28} />
                  <Slot $w={31}><ListGear /></Slot>
                </Item>
              </Column>
            </GroupBody>
            <GroupLabel $pr={2}><Fit w={25}>View</Fit></GroupLabel>
          </Group>

          <Group $w={217}>
            <GroupBody>
              <Big w={54} icon={<EditTextIcon />} lines={[['Edit', 20], ['Text', 20.5]]} />
              <Big w={54} chev="inline" icon={<EditObjectsIcon />} lines={[['Edit', 20], ['Objects', 39.5]]} />
              <Big w={54} chev="below" icon={<AddIcon />} lines={[['Add', 22]]} />
              <Big w={50} chev="below" icon={<SelectionIcon />} lines={[['Selection', 47.5]]} />
            </GroupBody>
            <GroupLabel $pr={1}><Fit w={38}>Objects</Fit></GroupLabel>
          </Group>

          <Group $w={269}>
            <GroupBody>
              <Column $w={115} $pl={5}>
                <Small icon={<Typewriter />} text="Typewriter" w={55} tail="corner" />
                <Small icon={<HighlightIcon />} text="Highlight Text" w={74} tail="corner" />
                <Small icon={<UnderlineIcon />} text="Underline" w={51} tail="corner" />
              </Column>
              <Column $w={96}>
                <Small gap={3} icon={<StickyIcon />} text="Sticky Note" w={60.5} tail="corner" />
                <Small gap={3} icon={<ArrowIcon />} text="Arrow" w={32} tail="corner" />
                <Small gap={3} icon={<RectIcon />} text="Rectangle" w={52} tail="corner" />
              </Column>
              <Sep $h={84} />
              <Big w={55} chev="below" icon={<StampIcon />} lines={[['Stamp', 34]]} />
            </GroupBody>
            <GroupLabel $pr={1}><Fit w={48.5}>Comment</Fit></GroupLabel>
          </Group>

          <Group $w={209}>
            <GroupBody>
              <Big w={55} icon={<EditLinksIcon />} lines={[['Add/Edit', 47], ['Links', 27]]} />
              <Column $pl={1}>
                <Small gap={3} icon={<Globe />} text="Add Links to URLs" w={95.5} />
                <Small gap={3} icon={<Globe minus />} text="Remove All Web-Links" w={119.5} />
                <Small gap={3} icon={<Barcode />} text="Add Links to Barcodes" w={117} />
              </Column>
            </GroupBody>
            <GroupLabel><Fit w={25.5}>Links</Fit></GroupLabel>
          </Group>

          <Group $w={66}>
            <GroupBody>
              <Big w={64} icon={<SignIcon />} lines={[['Sign', 23], ['Document', 56]]} />
            </GroupBody>
            <GroupLabel $pr={1}><Fit w={35.5}>Protect</Fit></GroupLabel>
          </Group>
        </Ribbon>

        <TabStrip>
          <DocTab>
            <DocTabRow><Fit w={113}>Problem PID example</Fit><Cross s={6} t={2.4} /></DocTabRow>
            <DocTabLine />
          </DocTab>
          <StripButton $w={27} $ml={2}>
            <I w={15} h={15}><path d="M7.500 0v15M0 7.500h15" stroke="#333" strokeWidth="1.200" /></I>
          </StripButton>
          <Grow />
          <StripButton $w={29} $h={29}><Cross s={12} /></StripButton>
        </TabStrip>
        <WhiteRule />

        <Work>
          <Sidebar>
            <SideTop><BackTo /></SideTop>
            <SideGrip><Grip $w={25} $h={9} /></SideGrip>
            {side.map((S, i) => <SideSlot key={i}><S /></SideSlot>)}
            <SideRule />
            {sideLower.map((S, i) => <SideSlot key={i}><S /></SideSlot>)}
          </Sidebar>
          <Main>
            <ViewRow>
              <Canvas><Drawing /></Canvas>
              <VScroll>
                <I w={8} h={6}><path d="M1 5l3-3 3 3" stroke="#666" strokeWidth="1.500" /></I>
                <VThumb />
                <Grow />
                <Chev c="#666" />
              </VScroll>
            </ViewRow>
            <HScroll>
              <I w={6} h={8}><path d="M5 1L2 4l3 3" stroke="#555" strokeWidth="1.500" /></I>
              <HThumb />
              <Grow />
              <I w={6} h={8}><path d="M1 1l3 3-3 3" stroke="#555" strokeWidth="1.500" /></I>
            </HScroll>
            <Status>
              <StatusGrip ml={2} />
              <Gap $w={2} /><Gears />
              <Gap $w={3} /><Fit w={50}>Options...</Fit>
              <Slot $w={19}><Chev /></Slot>
              <Sep $h={28} /><Gap $w={2} /><SizeIcon />
              <Stack><Fit w={69}>W: 2383.94pt</Fit><Fit w={69}>H: 1683.78pt</Fit></Stack>
              <Gap $w={3} /><Sep $h={24} /><Gap $w={4} /><CrossIcon />
              <Stack $ml={2}><Fit w={12}>X :</Fit><Fit w={12}>Y :</Fit></Stack>
              <Gap $w={564} />
              <StatusGrip />
              <Gap $w={3} /><RoundArrow d="M7.500 6v10M15 6l-5 5 5 5" c="#90c9f6" ring="#bbb" />
              <Gap $w={6} /><RoundArrow d="M13 6l-5 5 5 5" c="#90c9f6" ring="#bbb" />
              <Gap $w={4} />
              <PageBox><span>1</span><I w={7} h={18}><path d="M1 17L6 1" stroke="#777" strokeWidth="1.200" /></I><PageTotal>1</PageTotal></PageBox>
              <Gap $w={5} /><RoundArrow d="M9 6l5 5-5 5" c="#90c9f6" ring="#bbb" />
              <Gap $w={6} /><RoundArrow d="M14.500 6v10M7 6l5 5-5 5" c="#90c9f6" ring="#bbb" />
              <Gap $w={4} /><Sep $h={28} /><Gap $w={4} />
              <RoundArrow d={LEFT} c="#b3d48c" ring="#bbb" />
              <Gap $w={6} /><RoundArrow d={RIGHT} c="#b3d48c" ring="#bbb" />
              <Grow />
              <StatusGrip />
              <Gap $w={6} /><OnePage />
              <Gap $w={6} /><Selected><Continuous /></Selected>
              <Gap $w={2} /><TwoPages />
              <Gap $w={4} /><FourPages />
              <Gap $w={5} /><StatusGrip />
              <Gap $w={1} /><Combo $w={82}><Fit w={34}>1000%</Fit><Chev /></Combo>
              <Gap $w={2} /><Sep $h={28} /><Gap $w={4} />
              <ZoomBtn /><Gap $w={5} /><Slider /><Gap $w={4} /><ZoomBtn plus />
              <Gap $w={6} /><StatusGrip />
              <Gap $w={4} /><Acrobat />
              <Gap $w={5} /><Chev />
              <Gap $w={4} />
              <I w={8} h={28}><rect width="8" height="28" fill="#e6e6e6" /><path d="M1 2l3 2.500L7 2M1 7.500h6" stroke="#333" strokeWidth="1.300" /></I>
            </Status>
          </Main>
        </Work>
        <Footer />
      </Window>
    </>
  );
}
